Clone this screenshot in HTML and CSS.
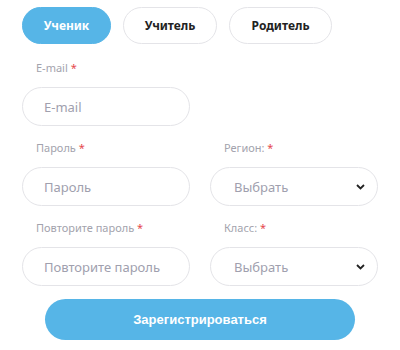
FILE: index.html
```html
<!DOCTYPE html>
<html lang="ru">
<head>
<meta charset="utf-8">
<link rel="stylesheet" href="styles.css">
</head>
<body>
<div class="page">
  <div class="tabs">
    <button class="tab tab-active">Ученик</button>
    <button class="tab">Учитель</button>
    <button class="tab">Родитель</button>
  </div>
  <form class="form">
    <div class="field">
      <div class="label">E-mail <span class="req">*</span></div>
      <div class="input">E-mail</div>
    </div>
    <div class="field"></div>
    <div class="field">
      <div class="label">Пароль <span class="req">*</span></div>
      <div class="input">Пароль</div>
    </div>
    <div class="field">
      <div class="label">Регион: <span class="req">*</span></div>
      <div class="input select">Выбрать
        <svg class="chev" width="9" height="6" viewBox="0 0 9 6"><path d="M1 1l3.5 3.5L8 1" fill="none" stroke="#222" stroke-width="1.8"/></svg>
      </div>
    </div>
    <div class="field">
      <div class="label">Повторите пароль <span class="req">*</span></div>
      <div class="input">Повторите пароль</div>
    </div>
    <div class="field">
      <div class="label">Класс: <span class="req">*</span></div>
      <div class="input select">Выбрать
        <svg class="chev" width="9" height="6" viewBox="0 0 9 6"><path d="M1 1l3.5 3.5L8 1" fill="none" stroke="#222" stroke-width="1.8"/></svg>
      </div>
    </div>
  </form>
  <div class="submit-row">
    <button class="submit">Зарегистрироваться</button>
  </div>
</div>
</body>
</html>
```
FILE: styles.css
```css
* { box-sizing: border-box; }
html, body { margin: 0; padding: 0; background: #fff; }
body { font-family: "Noto Sans", "DejaVu Sans", sans-serif; }
.page { padding: 7px 0 0 22px; width: 400px; }
.tabs { display: flex; gap: 12px; }
.tab {
  height: 37px; border-radius: 19px; border: 1px solid #e4e4e8; background: #fff;
  font-family: "Noto Sans", sans-serif; font-weight: 700; font-size: 12px; color: #222;
  padding: 0; cursor: pointer;
}
.tab:nth-child(1) { width: 89px; }
.tab:nth-child(2) { width: 94px; }
.tab:nth-child(3) { width: 103px; }
.tab-active { background: #56b5e7; border-color: #56b5e7; color: #fff; }
.form {
  display: grid; grid-template-columns: 168px 168px; column-gap: 20px;
  margin-top: 16px;
}
.field { height: 80px; }
.label { height: 16px; line-height: 16px; font-size: 11px; color: #a3a3ad; padding-left: 14px; margin-bottom: 11px; }
.req { color: #e5484d; }
.input {
  height: 39px; border: 1px solid #e4e4e8; border-radius: 20px;
  display: flex; align-items: center; padding-left: 21px;
  font-size: 13px; color: #a0a0ae;
}
.select { padding-left: 23px; padding-right: 12px; justify-content: space-between; }
.chev { display: block; }
.submit-row { width: 356px; display: flex; justify-content: center; margin-top: -1px; }
.submit {
  width: 310px; height: 41px; border: none; border-radius: 21px; background: #56b5e7;
  color: #fff; font-family: "Liberation Sans", Arial, sans-serif; font-weight: 700; font-size: 13px;
}
```
